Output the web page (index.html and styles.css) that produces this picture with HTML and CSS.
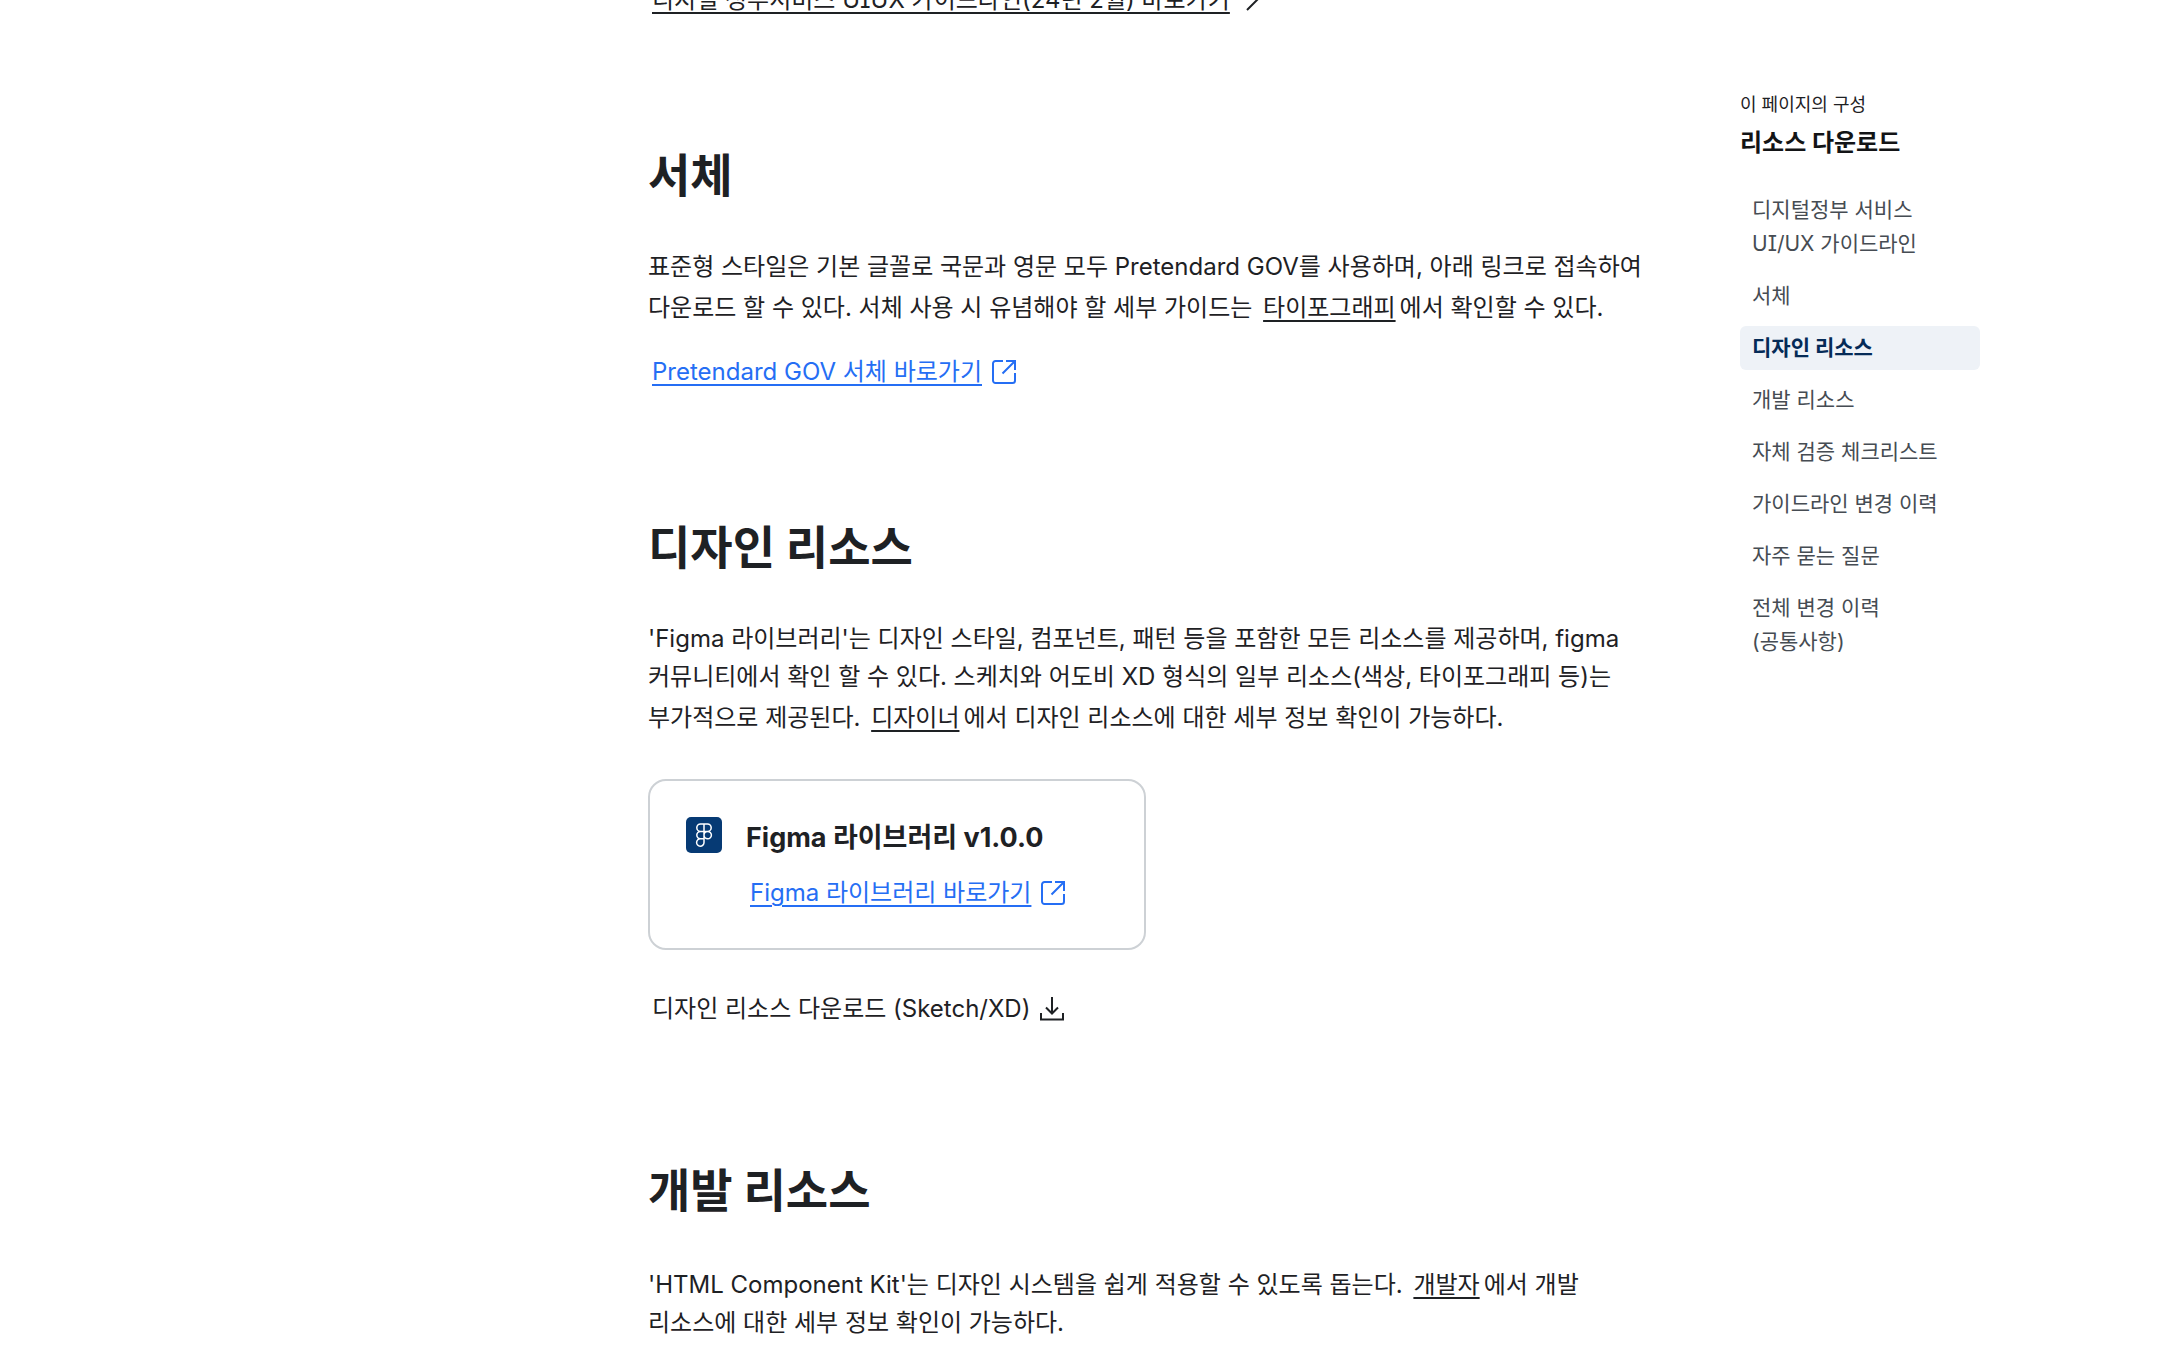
FILE: index.html
```html
<!DOCTYPE html>
<html lang="ko">
<head>
    <meta charset="UTF-8">
    <meta name="viewport" content="width=device-width, initial-scale=1">
    <title>리소스 다운로드</title>

    <link rel="stylesheet" href="styles.css">
</head>

<body>
    <svg class="sprite" aria-hidden="true">
        <symbol id="ico-go" viewBox="0 0 24 24">
            <path d="M7 2l10 10L7 22"/>
        </symbol>
        <symbol id="ico-external" viewBox="0 0 24 24">
            <path d="M11 1H3.500A2.500 2.500 0 0 0 1 3.500v17A2.500 2.500 0 0 0 3.500 23h17a2.500 2.500 0 0 0 2.500-2.500V13M14 1h9v9M23 1L10.500 13.500"/>
        </symbol>
        <symbol id="ico-download" viewBox="0 0 24 24">
            <path d="M12 0v16M6 10.500l6 6 6-6M1 16v6.500h22V16"/>
        </symbol>
    </svg>

    <div class="container">
        <main class="content">
            <section class="section">
                <a href="#" class="link">
                    <span>디지털 정부서비스 UIUX 가이드라인(24년 2월) 바로가기</span>
                    <svg class="icon"><use href="#ico-go"/></svg>
                </a>
            </section>

            <section class="section" id="font">
                <h2>서체</h2>
                <p>표준형 스타일은 기본 글꼴로 국문과 영문 모두 Pretendard GOV를 사용하며, 아래 링크로 접속하여 다운로드 할 수 있다. 서체 사용 시 유념해야 할 세부 가이드는 <a href="#" class="text-link">타이포그래피</a>에서 확인할 수 있다.</p>
                <a href="#" class="link link-primary">
                    <span>Pretendard GOV 서체 바로가기</span>
                    <svg class="icon"><use href="#ico-external"/></svg>
                </a>
            </section>

            <section class="section" id="design">
                <h2>디자인 리소스</h2>
                <p>'Figma 라이브러리'는 디자인 스타일, 컴포넌트, 패턴 등을 포함한 모든 리소스를 제공하며, figma 커뮤니티에서 확인 할 수 있다. 스케치와 어도비 XD 형식의 일부 리소스(색상, 타이포그래피 등)는 부가적으로 제공된다. <a href="#" class="text-link">디자이너</a>에서 디자인 리소스에 대한 세부 정보 확인이 가능하다.</p>
                <div class="card-list">
                    <div class="card">
                        <svg class="card-logo" viewBox="0 0 36 36" aria-hidden="true">
                            <rect width="36" height="36" rx="5"/>
                            <path d="M18 7h-3.500a3.700 3.700 0 0 0 0 7.400H18zM18 7h3.500a3.700 3.700 0 0 1 0 7.400H18zM18 14.400h-3.500a3.700 3.700 0 0 0 0 7.400H18zM21.700 14.400a3.700 3.700 0 1 1 0 7.400 3.700 3.700 0 0 1 0-7.400zM18 21.800h-3.500a3.700 3.700 0 1 0 3.500 3.700z"/>
                        </svg>
                        <div class="card-body">
                            <h3>Figma 라이브러리 v1.0.0</h3>
                            <a href="#" class="link link-primary">
                                <span>Figma 라이브러리 바로가기</span>
                                <svg class="icon"><use href="#ico-external"/></svg>
                            </a>
                        </div>
                    </div>
                </div>
                <a href="#" class="link link-download">
                    <span>디자인 리소스 다운로드 (Sketch/XD)</span>
                    <svg class="icon"><use href="#ico-download"/></svg>
                </a>
            </section>

            <section class="section" id="develop">
                <h2>개발 리소스</h2>
                <p>'HTML Component Kit'는 디자인 시스템을 쉽게 적용할 수 있도록 돕는다. <a href="#" class="text-link">개발자</a>에서 개발 리소스에 대한 세부 정보 확인이 가능하다.</p>
            </section>
        </main>

        <nav class="quick-nav" aria-label="이 페이지의 구성">
            <p class="quick-caption">이 페이지의 구성</p>
            <p class="quick-title">리소스 다운로드</p>
            <ul>
                <li><a href="#">디지털정부 서비스 UI/UX 가이드라인</a></li>
                <li><a href="#font">서체</a></li>
                <li><a href="#design" class="active" aria-current="true">디자인 리소스</a></li>
                <li><a href="#develop">개발 리소스</a></li>
                <li><a href="#">자체 검증 체크리스트</a></li>
                <li><a href="#">가이드라인 변경 이력</a></li>
                <li><a href="#">자주 묻는 질문</a></li>
                <li><a href="#">전체 변경 이력<br>(공통사항)</a></li>
            </ul>
        </nav>
    </div>
</body>
</html>
```
FILE: styles.css
```css
* {
    box-sizing: border-box;
}

html {
    overflow: hidden;
}

body {
    margin: 0;
    background: #fff;
    color: #1e2124;
    font-family: Inter, "Noto Sans CJK KR", sans-serif;
    font-feature-settings: "cv08";
    font-size: 24px;
    line-height: 38px;
    word-break: keep-all;
}

h2, h3, p, ul {
    margin: 0;
    padding: 0;
}

a {
    color: inherit;
    text-decoration: none;
}

.sprite {
    display: none;
}

.container {
    display: grid;
    grid-template-columns: minmax(0, 1fr) 240px;
    column-gap: 84px;
    max-width: 1800px;
    margin: 0 auto;
    padding-left: 468px;
}

/* content */
.content {
    margin-top: -19px;
}

.section {
    display: flex;
    flex-direction: column;
    align-items: flex-start;
    margin-bottom: 124px;
}

.section:last-child {
    margin-bottom: 0;
}

.section h2 {
    margin-bottom: 41px;
    font-size: 46px;
    font-weight: 700;
    line-height: 64px;
}

.section p + .link {
    margin-top: 26px;
}

.text-link {
    display: inline-block;
    margin: 0 4px;
    padding-top: 3px;
}

.text-link,
.link span {
    text-decoration: underline;
    text-decoration-thickness: 2px;
    text-underline-offset: 4px;
}

.link {
    display: inline-flex;
    align-items: center;
    gap: 10px;
    padding: 0 4px;
}

.link-primary {
    color: #256ef4;
}

.link-download {
    margin-bottom: 6px;
}

.link-download span {
    text-decoration: none;
}

.icon {
    width: 24px;
    height: 24px;
    fill: none;
    stroke: currentColor;
    stroke-width: 2;
}

/* card */
.card-list {
    display: grid;
    grid-template-columns: 1fr 1fr;
    gap: 12px;
    width: 100%;
    margin: 42px 0 40px;
}

.card {
    display: flex;
    gap: 24px;
    padding: 36px;
    border: 2px solid #cdd1d5;
    border-radius: 18px;
}

.card-logo {
    flex: none;
    width: 36px;
    height: 36px;
}

.card-logo rect {
    fill: #063a74;
}

.card-logo path {
    fill: none;
    stroke: #fff;
    stroke-width: 1.5;
}

.card h3 {
    margin-bottom: 15px;
    font-size: 27px;
    font-weight: 700;
    line-height: 42px;
}

/* quick nav */
.quick-nav {
    padding-top: 91px;
}

.quick-caption {
    font-size: 18px;
    line-height: 28px;
}

.quick-title {
    margin: 5px 0 26px;
    color: #131416;
    font-weight: 700;
}

.quick-nav ul {
    display: flex;
    flex-direction: column;
    gap: 8px;
    list-style: none;
}

.quick-nav a {
    display: block;
    padding: 5px 12px;
    border-radius: 6px;
    color: #464c53;
    font-size: 21px;
    line-height: 34px;
}

.quick-nav .active {
    background: #eef2f7;
    color: #052b57;
    font-weight: 700;
}
```
